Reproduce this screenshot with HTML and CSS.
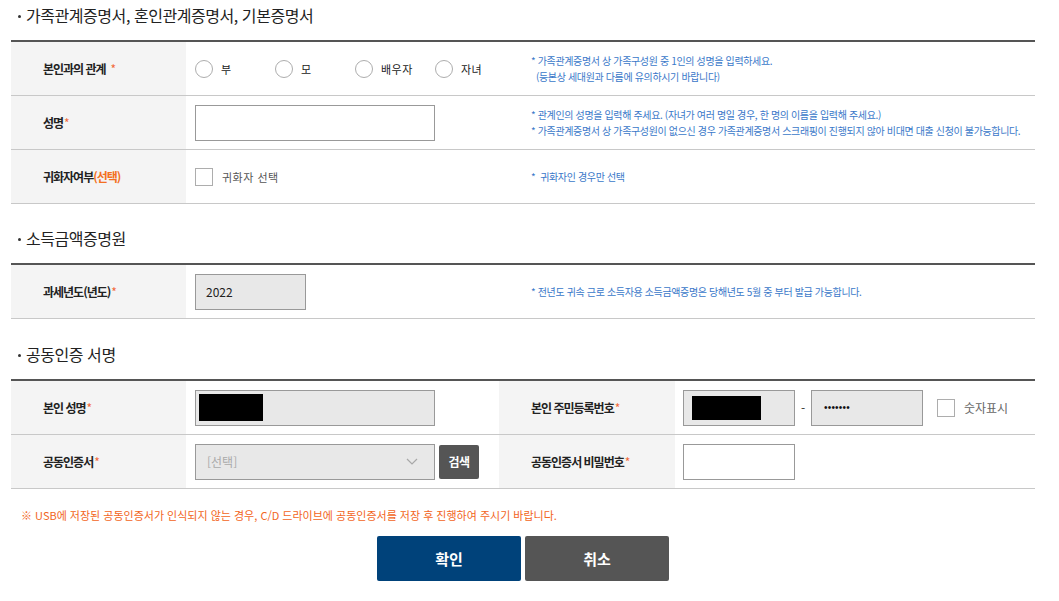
FILE: index.html
```html
<!DOCTYPE html>
<html lang="ko">
<head>
<meta charset="utf-8">
<title>증명서 제출</title>
<link rel="stylesheet" href="styles.css">
</head>
<body>
<div class="wrap">
  <h2 class="sec-title">가족관계증명서, 혼인관계증명서, 기본증명서</h2>
  <div class="tbl">
    <div class="row row-a">
      <div class="th">본인과의 관계<span class="req req-sp">*</span></div>
      <div class="td">
        <label class="radio-item"><input type="radio" name="rel" class="radio"><span>부</span></label>
        <label class="radio-item"><input type="radio" name="rel" class="radio"><span>모</span></label>
        <label class="radio-item"><input type="radio" name="rel" class="radio"><span>배우자</span></label>
        <label class="radio-item"><input type="radio" name="rel" class="radio"><span>자녀</span></label>
      </div>
      <div class="hint">
        <p>* 가족관계증명서 상 가족구성원 중 1인의 성명을 입력하세요.</p>
        <p class="indent">(등본상 세대원과 다름에 유의하시기 바랍니다)</p>
      </div>
    </div>
    <div class="row row-a">
      <div class="th">성명<span class="req">*</span></div>
      <div class="td"><div class="inp inp-name"></div></div>
      <div class="hint">
        <p>* 관계인의 성명을 입력해 주세요. (자녀가 여러 명일 경우, 한 명의 이름을 입력해 주세요.)</p>
        <p>* 가족관계증명서 상 가족구성원이 없으신 경우 가족관계증명서 스크래핑이 진행되지 않아 비대면 대출 신청이 불가능합니다.</p>
      </div>
    </div>
    <div class="row row-a">
      <div class="th">귀화자여부<span class="opt">(선택)</span></div>
      <div class="td">
        <label class="check-item"><input type="checkbox" class="check"><span>귀화자 선택</span></label>
      </div>
      <div class="hint"><p>*&nbsp; 귀화자인 경우만 선택</p></div>
    </div>
  </div>

  <h2 class="sec-title">소득금액증명원</h2>
  <div class="tbl">
    <div class="row row-a">
      <div class="th">과세년도(년도)<span class="req">*</span></div>
      <div class="td"><div class="inp inp-year grey">2022</div></div>
      <div class="hint"><p>* 전년도 귀속 근로 소득자용 소득금액증명은 당해년도 5월 중 부터 발급 가능합니다.</p></div>
    </div>
  </div>

  <h2 class="sec-title sec-last">공동인증 서명</h2>
  <div class="tbl">
    <div class="row row-b">
      <div class="th">본인 성명<span class="req">*</span></div>
      <div class="td"><div class="inp inp-name grey"><span class="mask mask-name"></span></div></div>
      <div class="th">본인 주민등록번호<span class="req">*</span></div>
      <div class="td td-r">
        <div class="inp inp-sm grey"><span class="mask mask-id"></span></div>
        <span class="dash">-</span>
        <div class="inp inp-sm grey pw">•••••••</div>
        <label class="check-item check-num"><input type="checkbox" class="check"><span>숫자표시</span></label>
      </div>
    </div>
    <div class="row row-b">
      <div class="th">공동인증서<span class="req">*</span></div>
      <div class="td">
        <div class="inp inp-name grey sel">
          <span class="sel-text">[선택]</span>
          <svg class="chev" width="12" height="7" viewBox="0 0 12 7"><polyline points="1,1 6,6 11,1" fill="none" stroke="#a8a8a8" stroke-width="1.2"/></svg>
        </div>
        <button class="btn-search" type="button">검색</button>
      </div>
      <div class="th">공동인증서 비밀번호<span class="req">*</span></div>
      <div class="td td-r"><div class="inp inp-sm"></div></div>
    </div>
  </div>

  <p class="notice">※ USB에 저장된 공동인증서가 인식되지 않는 경우, C/D 드라이브에 공동인증서를 저장 후 진행하여 주시기 바랍니다.</p>

  <div class="btns">
    <button class="btn btn-ok" type="button">확인</button>
    <button class="btn btn-cancel" type="button">취소</button>
  </div>
</div>
</body>
</html>
```

FILE: styles.css
```css
* { box-sizing: border-box; }
body {
  margin: 0;
  background: #fff;
  color: #222;
  font-family: "Noto Sans CJK KR", "Noto Sans", sans-serif;
}
p { margin: 0; }
.wrap {
  width: 1024px;
  margin-left: 11px;
  padding-top: 3px;
}
.sec-title {
  display: flex;
  align-items: center;
  margin: 22px 0 13px;
  height: 24px;
  font-size: 16px;
  line-height: 24px;
  font-weight: 400;
  letter-spacing: -0.45px;
  color: #222;
}
.sec-title:first-child { margin-top: 0; }
.sec-title.sec-last { margin-top: 23px; }
.sec-title::before {
  content: "";
  width: 3px;
  height: 3px;
  margin: 2px 5px 0 7px;
  background: #333;
  border-radius: 50%;
}
.tbl { border-top: 2px solid #555; }
.row {
  display: grid;
  height: 54px;
  border-bottom: 1px solid #c8c8c8;
}
.row-a { grid-template-columns: 175px 335px 1fr; }
.row-b { grid-template-columns: 175px 313px 176px 1fr; }
.th {
  display: flex;
  align-items: center;
  padding-left: 32px;
  background: #f4f4f4;
  font-size: 12px;
  font-weight: 700;
  letter-spacing: -1px;
  color: #222;
}
.req { color: #f26a3a; font-weight: 400; margin-left: 1px; }
.req-sp { margin-left: 5px; }
.opt { color: #f37021; }
.td {
  display: flex;
  align-items: center;
  padding-left: 9px;
}
.td-r { padding-left: 8px; }
.hint {
  display: flex;
  flex-direction: column;
  justify-content: center;
  padding-left: 10px;
  font-size: 10px;
  line-height: 16px;
  letter-spacing: -0.36px;
  color: #3a78c9;
}
.hint .indent { padding-left: 5px; }

.radio-item, .check-item {
  display: flex;
  align-items: center;
  gap: 8px;
  font-size: 11px;
  color: #222;
  letter-spacing: 0.5px;
}
.radio-item { width: 80px; }
.radio, .check {
  appearance: none;
  -webkit-appearance: none;
  margin: 0;
  width: 18px;
  height: 18px;
  border: 1px solid #adadad;
  background: #fff;
}
.radio { border-radius: 50%; }
.check-item { gap: 9px; color: #555; }

.inp {
  height: 36px;
  border: 1px solid #999;
  background: #fff;
  display: flex;
  align-items: center;
  font-size: 12px;
  color: #222;
}
.grey { background: #e8e8e8; }
.inp-name { width: 240px; }
.inp-year { width: 111px; padding-left: 10px; }
.inp-sm { width: 112px; }
.mask { display: block; background: #000; }
.mask-name { width: 64px; height: 27px; margin-left: 3px; }
.mask-id { width: 69px; height: 24px; margin-left: 8px; }
.dash { width: 16px; text-align: center; font-size: 12px; color: #333; }
.pw {
  padding-left: 12px;
  font-family: "Liberation Sans", sans-serif;
  font-size: 10px;
  letter-spacing: 0.2px;
  color: #111;
}
.check-num { margin-left: 14px; font-size: 12px; color: #666; letter-spacing: 0; }

.sel { justify-content: space-between; padding: 0 16px 0 11px; }
.sel-text { color: #aaa; font-size: 12px; }
.btn-search {
  margin-left: 4px;
  width: 40px;
  height: 34px;
  border: 0;
  border-radius: 2px;
  background: #555;
  color: #fff;
  font-family: inherit;
  font-size: 12px;
  font-weight: 700;
  letter-spacing: -0.5px;
  padding: 0;
}

.notice {
  margin-top: 18px;
  padding-left: 10px;
  font-size: 11px;
  line-height: 16px;
  letter-spacing: 0;
  color: #f26522;
}
.btns {
  display: flex;
  justify-content: center;
  gap: 4px;
  margin-top: 13px;
}
.btn {
  width: 144px;
  height: 45px;
  border: 0;
  border-radius: 2px;
  color: #fff;
  font-family: inherit;
  font-size: 15px;
  font-weight: 700;
}
.btn-ok { background: #00427a; }
.btn-cancel { background: #555; }
```
